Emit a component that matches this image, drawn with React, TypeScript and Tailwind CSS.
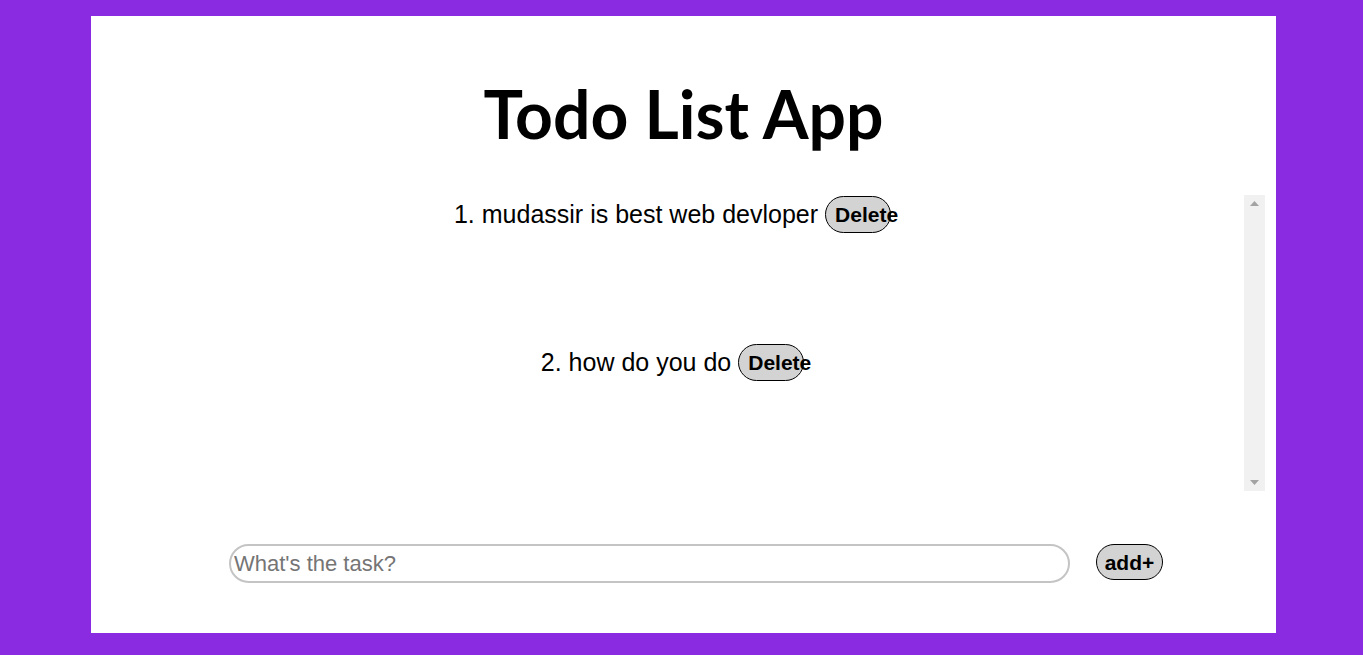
import React from "react";

function FakeScrollbar() {
  return (
    <div className="w-[21px] h-full bg-[#f1f1f1] flex flex-col items-center justify-between py-[6px]">
      <svg width="9" height="5" viewBox="0 0 9 5"><path d="M0 5 L4.5 0 L9 5 Z" fill="#a3a3a3" /></svg>
      <svg width="9" height="5" viewBox="0 0 9 5"><path d="M0 0 L4.5 5 L9 0 Z" fill="#a3a3a3" /></svg>
    </div>
  );
}

function DeleteBtn() {
  return (
    <button className="w-[66px] h-[37px] shrink-0 rounded-full bg-[#d3d3d3] border-[1.5px] border-black text-[21px] font-bold text-black pl-[9px] text-left whitespace-nowrap overflow-visible leading-none [font-family:'Liberation_Sans',Arial,sans-serif]">
      Delete
    </button>
  );
}

export default function App() {
  const items = ["mudassir is best web devloper", "how do you do"];
  return (
    <div className="w-full h-[655px] bg-[#8a2be2] pt-[16px] pl-[91px]">
      <div className="w-[1185px] h-[617px] bg-white flex flex-col">
        <h1 className="text-center text-[66px] font-bold leading-[80px] mt-[58px] text-black [font-family:Lato,sans-serif]">
          Todo List App
        </h1>
        <div className="flex mt-[41px] ml-[16px] mr-[11px] h-[296px]">
          <ol className="flex-1 flex flex-col items-center pt-[1px] pr-[6px] gap-[111px] [font-family:'Liberation_Sans',Arial,sans-serif] text-[25px] text-black">
            {items.map((t, i) => (
              <li key={i} className="flex items-center gap-[7px] h-[37px] whitespace-nowrap">
                <span>{i + 1}. {t}</span>
                <DeleteBtn />
              </li>
            ))}
          </ol>
          <FakeScrollbar />
        </div>
        <div className="flex items-center mt-[53px] ml-[138px]">
          <input
            placeholder="What's the task?"
            className="w-[841px] h-[39px] rounded-full border-2 border-[#c4c4c4] outline-none px-[3px] text-[22px] text-black placeholder:text-[#757575] [font-family:'Liberation_Sans',Arial,sans-serif]"
          />
          <button className="ml-[26px] w-[67px] h-[36px] rounded-full bg-[#d3d3d3] border-[1.5px] border-black text-[21px] font-bold text-black leading-none [font-family:'Liberation_Sans',Arial,sans-serif] -mt-[3px]">
            add+
          </button>
        </div>
      </div>
    </div>
  );
}
